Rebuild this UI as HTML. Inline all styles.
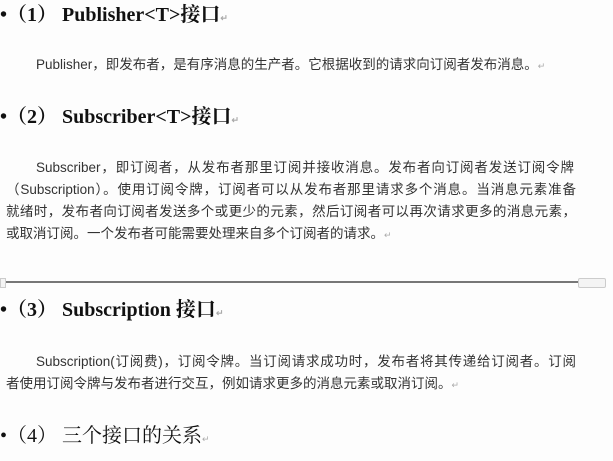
<!DOCTYPE html>
<html><head><meta charset="utf-8"><style>
body{margin:0;width:613px;height:461px;background:#fdfdfd;position:relative;overflow:hidden;font-family:"Liberation Sans","Noto Sans CJK SC",sans-serif;color:#333}
.h{position:absolute;left:0;font-family:"Liberation Serif","Noto Serif CJK SC",serif;font-weight:bold;font-size:20px;color:#111;white-space:nowrap;line-height:24px}
.h4{font-weight:normal}
.l{position:absolute;font-size:13.5px;line-height:18px;white-space:nowrap;color:#333}
.j{text-align:justify;text-align-last:justify;white-space:normal}
.m{color:#aaa;font-size:9px}
</style></head><body>
<div class="h" style="top:3px">•（1） Publisher&lt;T&gt;接口<span class="m">↵</span></div>
<div class="l" style="left:36px;top:56px">Publisher，即发布者，是有序消息的生产者。它根据收到的请求向订阅者发布消息。<span class="m">↵</span></div>
<div class="h" style="top:105px">•（2） Subscriber&lt;T&gt;接口<span class="m">↵</span></div>
<div class="l j" style="left:36px;top:159px;width:538px">Subscriber，即订阅者，从发布者那里订阅并接收消息。发布者向订阅者发送订阅令牌</div>
<div class="l j" style="left:6px;top:181px;width:570px">（Subscription）。使用订阅令牌，订阅者可以从发布者那里请求多个消息。当消息元素准备</div>
<div class="l j" style="left:6px;top:203px;width:570px">就绪时，发布者向订阅者发送多个或更少的元素，然后订阅者可以再次请求更多的消息元素，</div>
<div class="l" style="left:6px;top:225px">或取消订阅。一个发布者可能需要处理来自多个订阅者的请求。<span class="m">↵</span></div>
<div style="position:absolute;left:4px;top:281px;width:574px;height:2px;background:#777"></div>
<div style="position:absolute;left:578px;top:278px;width:26px;height:8px;border:1px solid #ccc;border-radius:2px;background:#f4f4f4"></div>
<div style="position:absolute;left:0;top:278px;width:4px;height:8px;border:1px solid #ccc;background:#f4f4f4"></div>
<div class="h" style="top:298px">•（3） Subscription 接口<span class="m">↵</span></div>
<div class="l j" style="left:36px;top:353px;width:540px">Subscription(订阅费)，订阅令牌。当订阅请求成功时，发布者将其传递给订阅者。订阅</div>
<div class="l" style="left:6px;top:375px">者使用订阅令牌与发布者进行交互，例如请求更多的消息元素或取消订阅。<span class="m">↵</span></div>
<div class="h h4" style="top:424px">•（4） 三个接口的关系<span class="m">↵</span></div>
</body></html>
